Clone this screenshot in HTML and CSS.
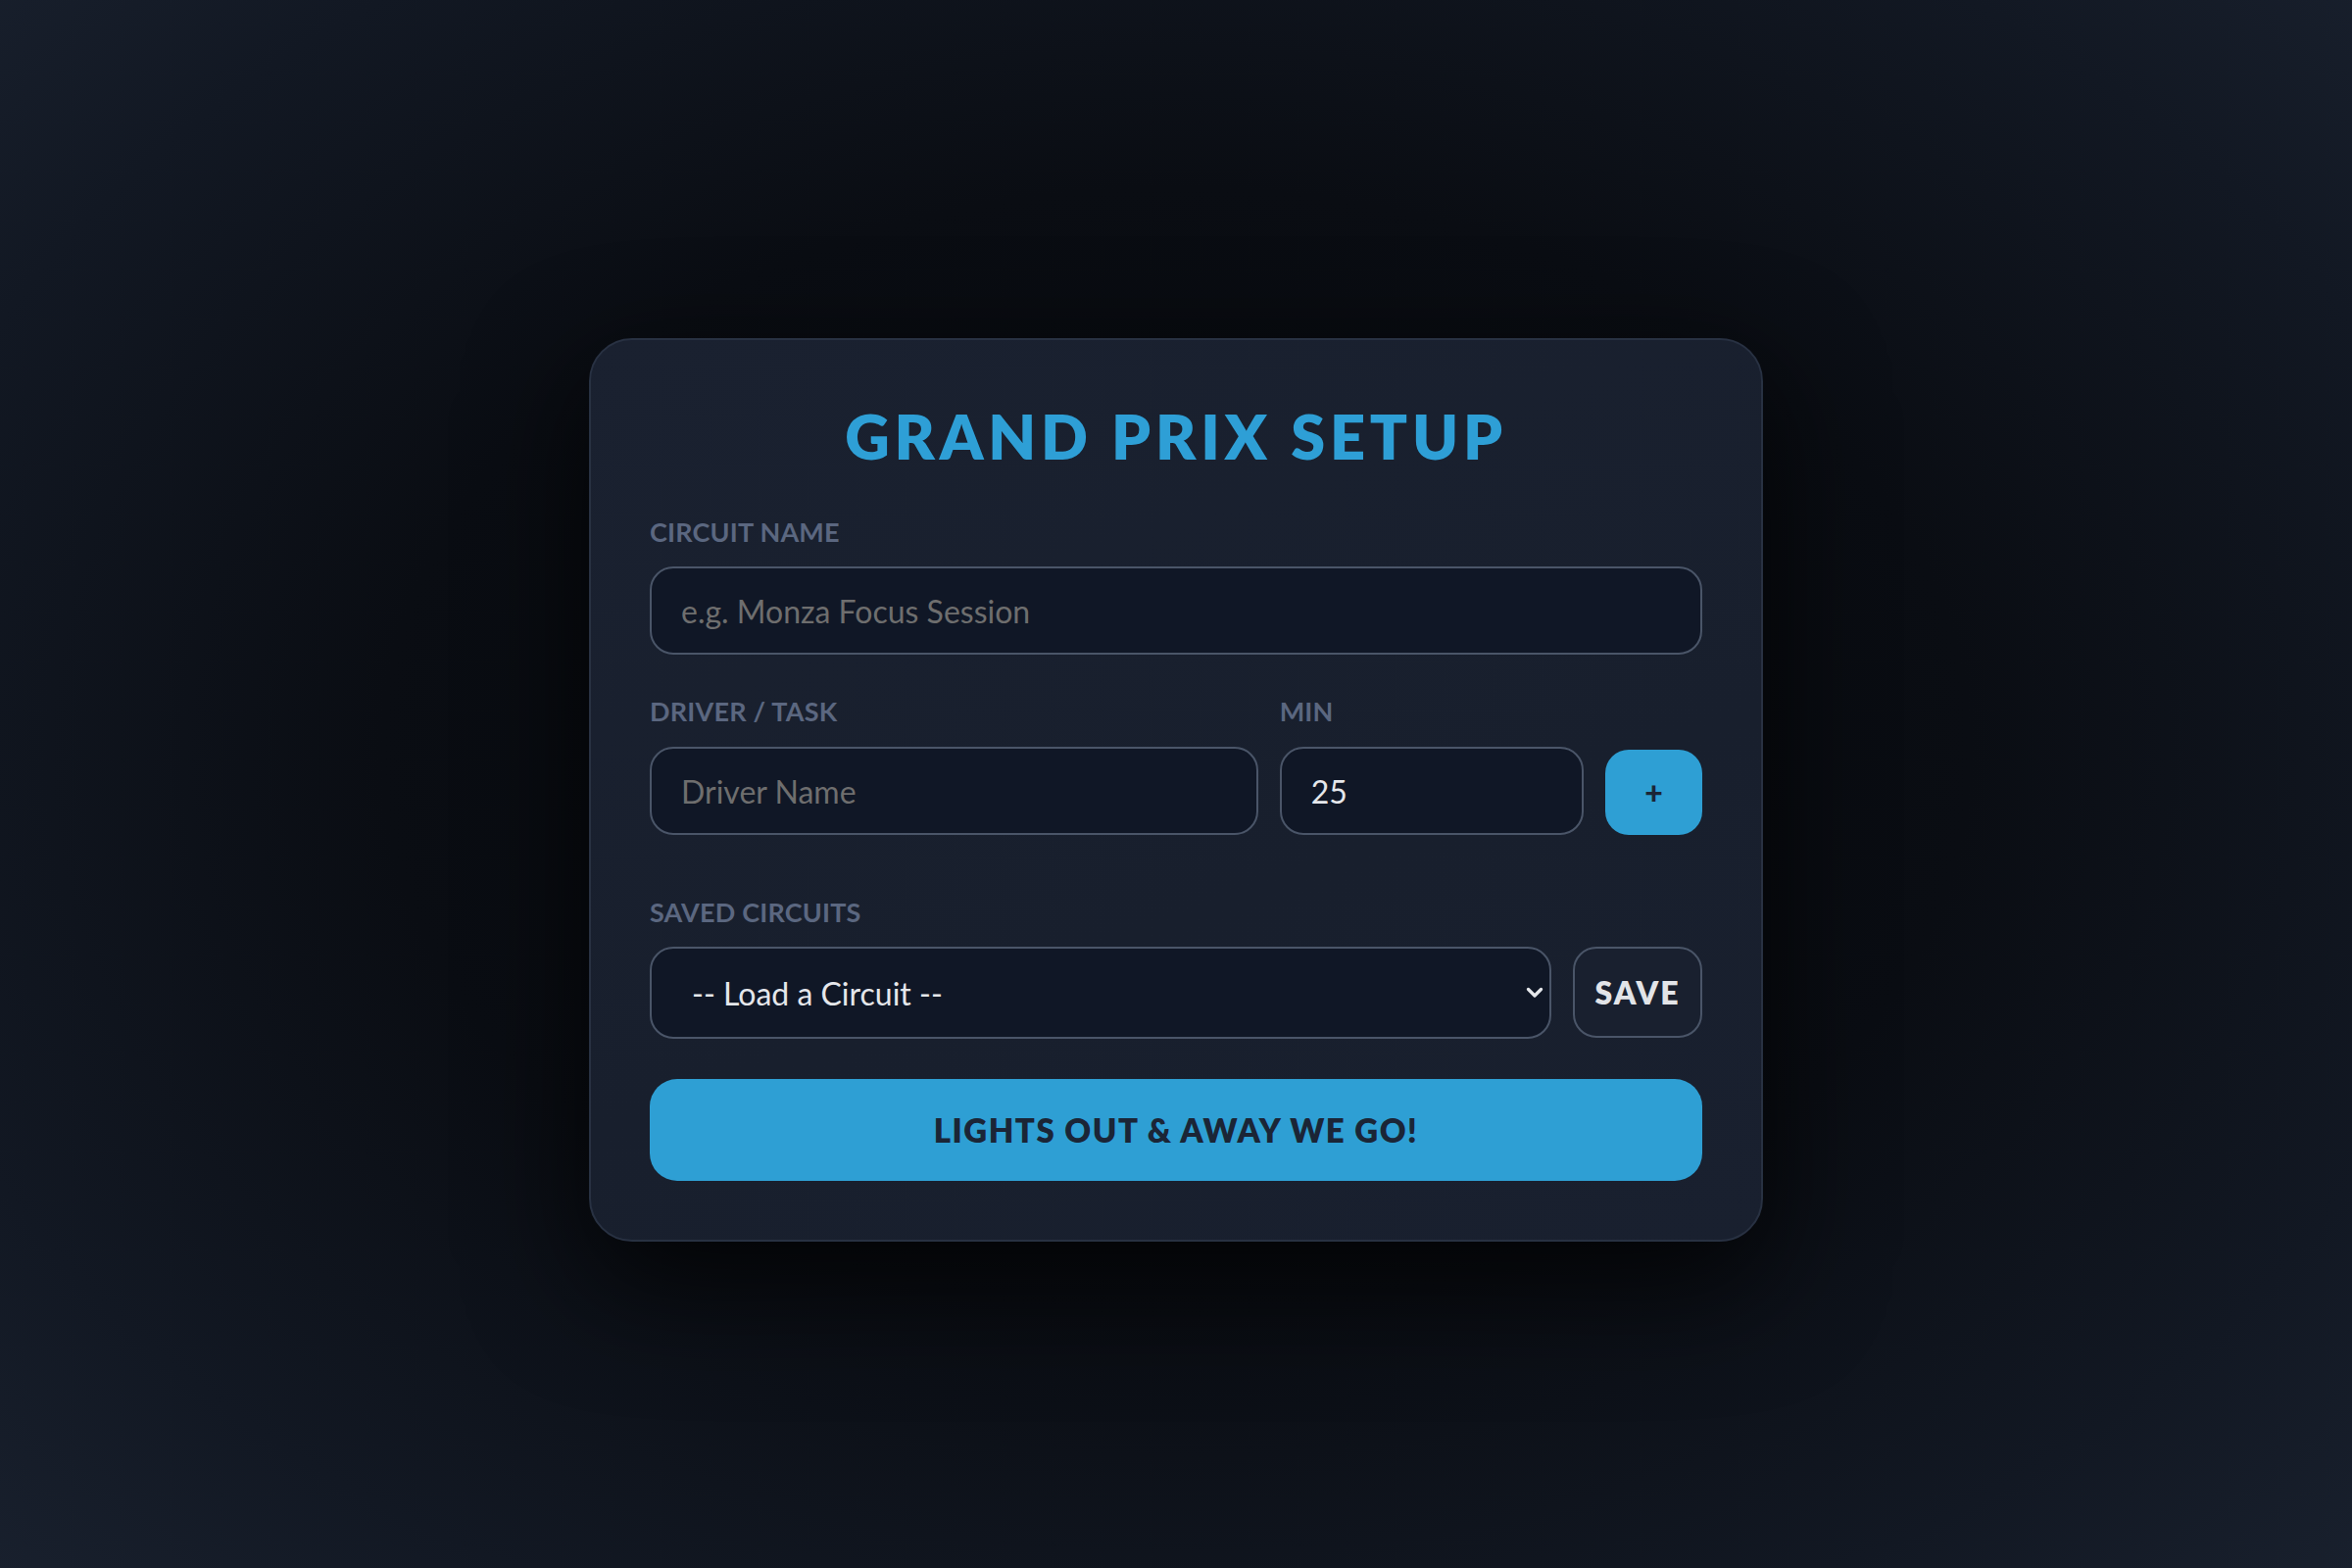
FILE: index.html
```html
<!DOCTYPE html>
<html lang="en">
<head>
<meta charset="utf-8">
<title>Grand Prix Setup</title>
<link rel="stylesheet" href="styles.css">
</head>
<body>
<main class="card">
  <h1 class="title">GRAND PRIX SETUP</h1>

  <div class="field">
    <label class="label" for="circuit">CIRCUIT NAME</label>
    <input class="input" id="circuit" type="text" placeholder="e.g. Monza Focus Session">
  </div>

  <div class="driver-row">
    <div class="col">
      <label class="label" for="driver">DRIVER / TASK</label>
      <input class="input" id="driver" type="text" placeholder="Driver Name">
    </div>
    <div class="col">
      <label class="label" for="min">MIN</label>
      <input class="input" id="min" type="text" value="25">
    </div>
    <button class="add-btn" type="button">+</button>
  </div>

  <div class="field saved">
    <label class="label" for="saved">SAVED CIRCUITS</label>
    <div class="saved-row">
      <div class="select-wrap">
        <select class="select" id="saved">
          <option>-- Load a Circuit --</option>
        </select>
        <svg class="chevron" width="18" height="12" viewBox="0 0 18 12" aria-hidden="true">
          <path d="M2.5 2.5 L9 9 L15.5 2.5" fill="none" stroke="#e5e7eb" stroke-width="3.2" stroke-linecap="round" stroke-linejoin="round"/>
        </svg>
      </div>
      <button class="save-btn" type="button">SAVE</button>
    </div>
  </div>

  <button class="go-btn" type="button">LIGHTS OUT &amp; AWAY WE GO!</button>
</main>
</body>
</html>
```

FILE: styles.css
```css
* {
  box-sizing: border-box;
}

html, body {
  margin: 0;
  height: 100%;
}

body {
  min-height: 100vh;
  padding-top: 12px;
  display: flex;
  align-items: center;
  justify-content: center;
  font-family: "Lato", "Noto Sans", sans-serif;
  background: radial-gradient(ellipse 75% 80% at 50% 48%, #05070a 0%, #0a0d13 45%, #121823 75%, #1b2331 100%);
}

.card {
  width: 1198px;
  padding: 60px;
  border: 2px solid #283142;
  border-radius: 44px;
  background: linear-gradient(160deg, #1a2130 0%, #181f2d 60%, #19202f 100%);
  box-shadow: 0 40px 120px rgba(0, 0, 0, 0.75);
}

.title {
  margin: 0 0 44px;
  text-align: center;
  font-size: 63px;
  line-height: 76px;
  font-weight: 800;
  letter-spacing: 4.8px;
  color: #2e9fd6;
}

.label {
  display: block;
  margin-bottom: 19px;
  font-size: 27px;
  line-height: 32px;
  font-weight: 700;
  letter-spacing: 0.2px;
  color: #5b6780;
}

.field {
  margin-bottom: 42px;
}

.input {
  display: block;
  width: 100%;
  height: 90px;
  padding: 0 30px;
  border: 2px solid #4a5568;
  border-radius: 24px;
  background: #101726;
  color: #e5e7eb;
  font-family: "Lato", "Noto Sans", sans-serif;
  font-size: 32px;
  outline: none;
}

.input::placeholder {
  color: #6e6e6e;
}

.driver-row {
  display: grid;
  grid-template-columns: 2fr 1fr 99px;
  column-gap: 22px;
  align-items: end;
  margin-bottom: 63px;
}

.driver-row .label {
  margin-bottom: 20px;
}

.add-btn {
  height: 87px;
  border: none;
  border-radius: 24px;
  background: #2e9fd4;
  color: #1b2536;
  font-family: "Lato", "Noto Sans", sans-serif;
  font-size: 32px;
  font-weight: 900;
  line-height: 1;
  padding: 0;
}

.saved {
  margin-bottom: 41px;
}

.saved-row {
  display: flex;
  gap: 22px;
}

.select-wrap {
  position: relative;
  flex: 1;
}

.select {
  display: block;
  width: 100%;
  height: 94px;
  padding: 0 40px 0 41px;
  border: 2px solid #4a5568;
  border-radius: 24px;
  background: #101726;
  color: #e5e7eb;
  font-family: "Lato", "Noto Sans", sans-serif;
  font-size: 32px;
  appearance: none;
  -webkit-appearance: none;
  outline: none;
}

.chevron {
  position: absolute;
  right: 8px;
  top: 50%;
  transform: translateY(-50%);
}

.save-btn {
  width: 132px;
  height: 93px;
  padding: 0;
  border: 2px solid #4a5568;
  border-radius: 24px;
  background: #19202f;
  color: #e2e4e8;
  font-family: "Lato", "Noto Sans", sans-serif;
  font-size: 32px;
  font-weight: 800;
  letter-spacing: 2px;
}

.go-btn {
  display: block;
  width: 100%;
  height: 104px;
  border: none;
  border-radius: 28px;
  background: #2e9fd4;
  color: #1b2536;
  font-family: "Lato", "Noto Sans", sans-serif;
  font-size: 33px;
  font-weight: 800;
  letter-spacing: 1.5px;
}
```
